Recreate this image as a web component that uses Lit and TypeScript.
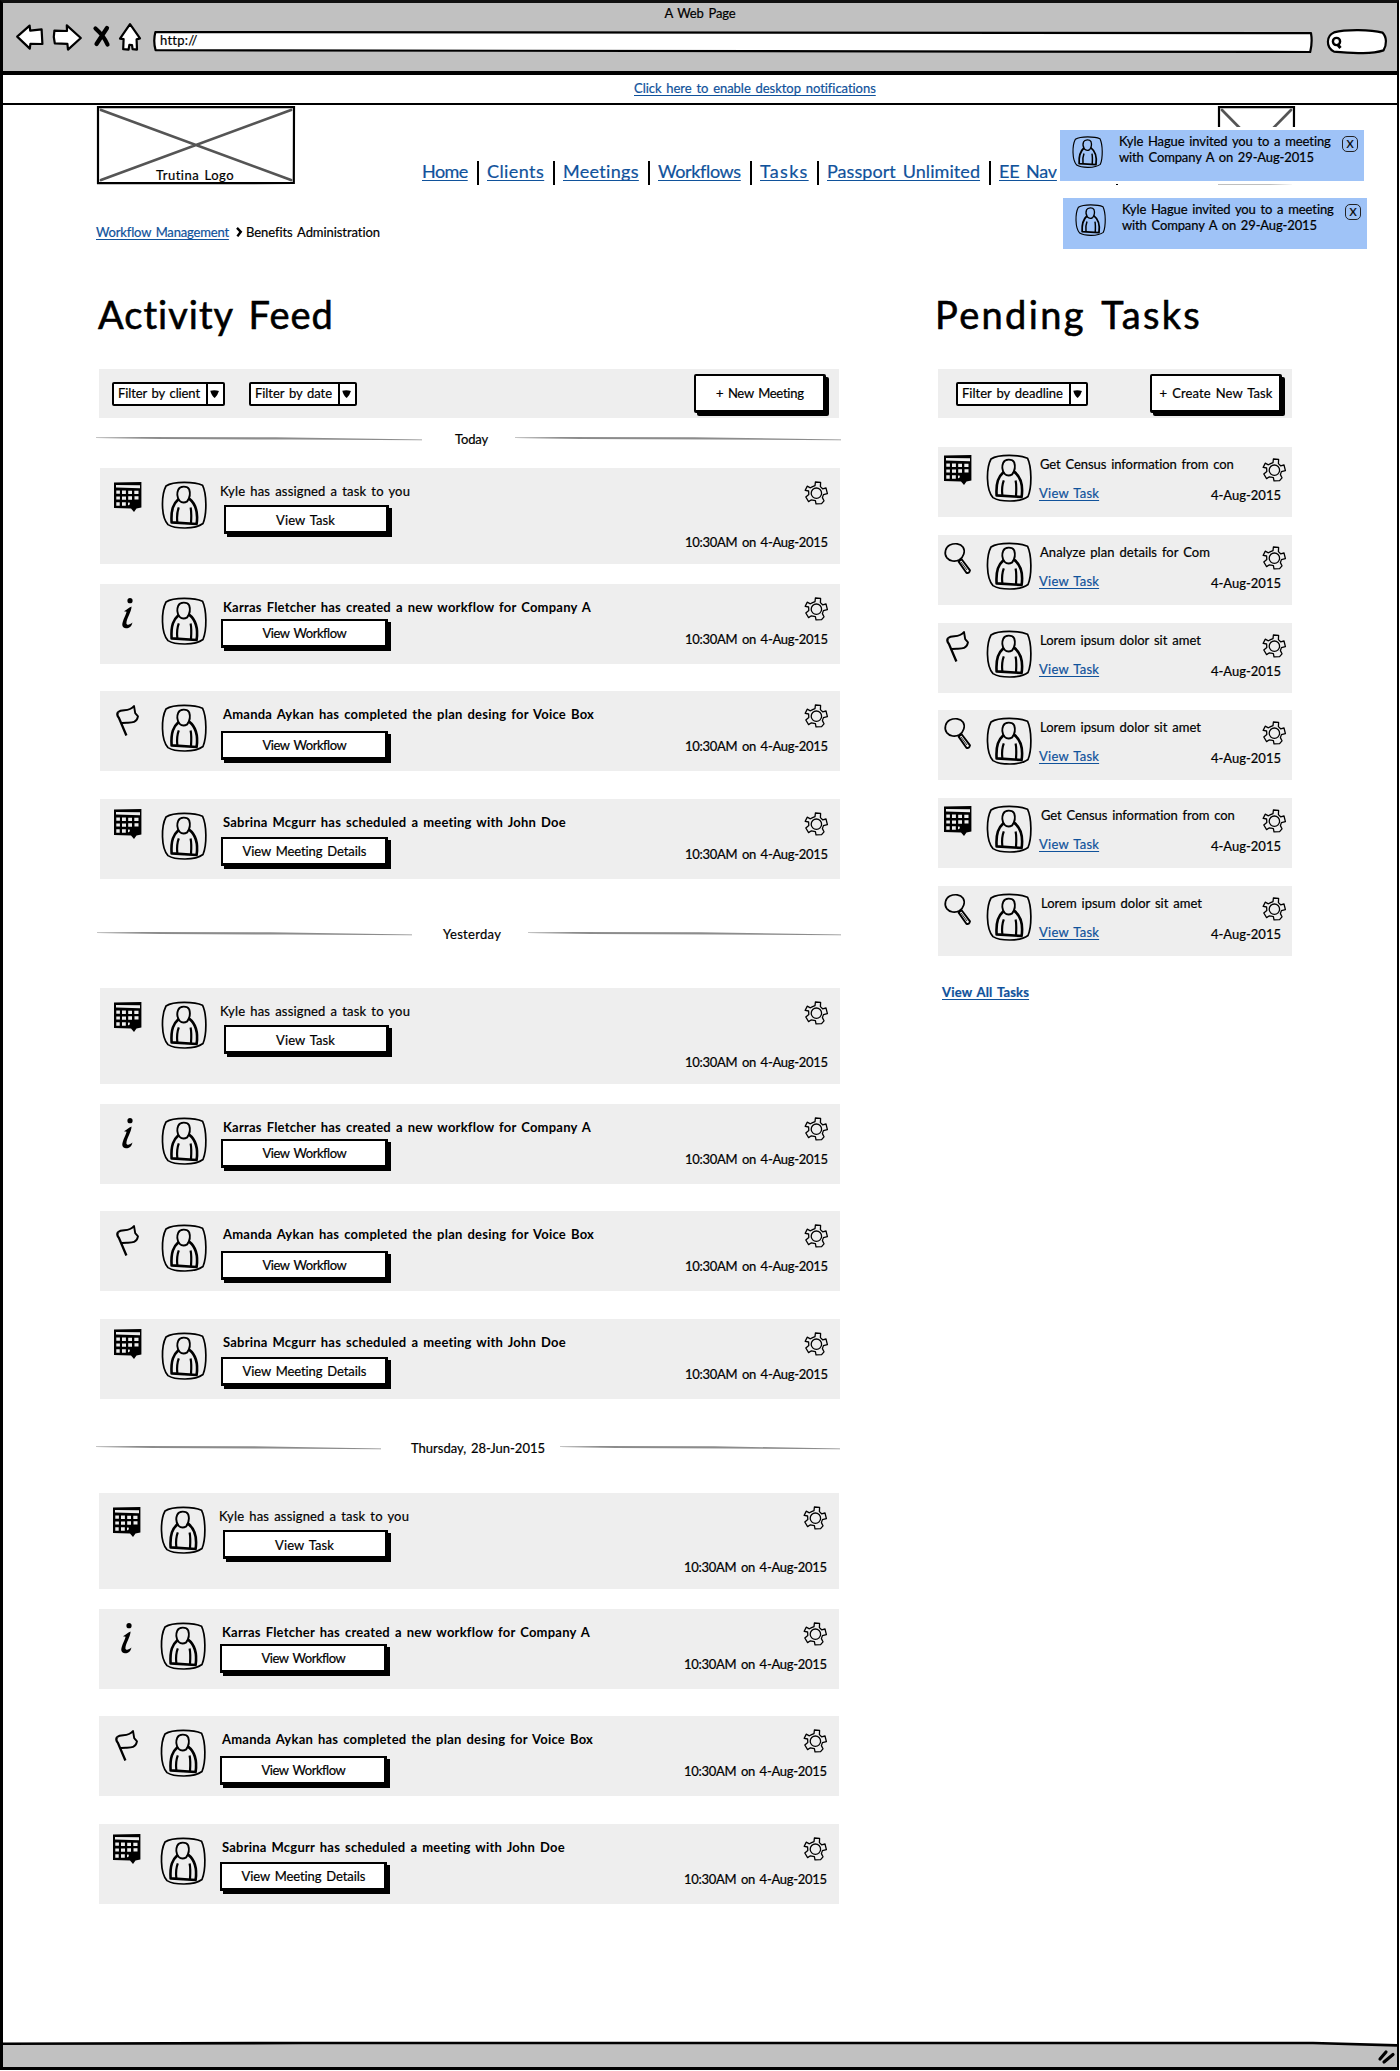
import { LitElement, html, css, svg, nothing } from "lit";
import { customElement, property } from "lit/decorators.js";
import { styleMap } from "lit/directives/style-map.js";

/** A run of text tracked out to an exact width. */
@customElement("fit-text")
class FitText extends LitElement {
  @property() text = "";
  @property({ type: Number }) w = 0;
  @property({ type: Boolean, reflect: true }) link = false;
  static styles = css`
    :host { display: inline-block; white-space: pre; flex: none; word-spacing: .12em; }
    :host([link]) span {
      color: #10529b;
      text-decoration: underline;
      text-decoration-thickness: 1px;
      text-underline-offset: 2px;
      text-decoration-skip-ink: none;
    }
  `;
  render() {
    return html`<span>${this.text}</span>`;
  }
  updated() {
    const s = this.renderRoot.querySelector("span") as HTMLElement;
    s.style.letterSpacing = "0px";
    const natural = s.getBoundingClientRect().width;
    s.style.letterSpacing = `${(this.w - natural) / (this.text.length - 0.5)}px`;
    this.style.width = `${this.w}px`;
  }
}

const t = (text: string, w: number, link = false) =>
  html`<fit-text .text=${text} .w=${w} ?link=${link}></fit-text>`;

const icons: Record<string, unknown> = {
  calendar: svg`
    <path d="M0 .6 27.4 0V25.6L22.5 26.4 20 30 17 26.4 0 26Z" fill="#000"/>
    <path d="M2 3 26 3.3V6.2L2 5.6Z" fill="#eee"/>
    <path d="M2.3 8.6h3.6v3.2H2.3zM8 8.6h3.9v3.4H8zM14.2 8.8h3.8v3.2h-3.8zM20.3 8.8h4.2v3.2h-4.2zM2.3 14.5h3.6v3.1H2.3zM8 14.4h4v3.3H8zM14.2 14.2h3.8v3.6h-3.8zM20.5 14.2h4v3.2h-4zM2.3 20.3h3.4v3.4H2.3zM8 20.3h3.8v3.4H8zM14 20.6l2 .2-.6 2.3-1.4.2z" fill="#eee"/>`,
  info: svg`
    <circle cx="16" cy="2.7" r="2.6" fill="#000"/>
    <path d="M10 13.2C13 11.7 14.5 9.7 17.6 8.6 17.2 14.5 12.7 20.5 12.4 25.2 12.5 27.3 15.5 27.2 18.4 24.6 17.6 29 14.6 30.5 12 30.3 8 30 7.8 26.8 8.8 23.8 9.8 20 12 16.8 12.6 13.8Z" fill="#000"/>`,
  flag: svg`
    <path d="M4.2 7C8.2 3.2 14.6 8 20 1L21.2 8.2 24 11.4C22.3 20.2 14.5 16.8 8 18" fill="none" stroke="#000" stroke-width="1.9" stroke-linejoin="round"/>
    <path d="M4.2 7C2.4 9.4 3.6 11.4 5 13L12.4 30.5" fill="none" stroke="#000" stroke-width="2.3"/>`,
  search: svg`
    <path d="M5.8 2.1C10.5-.1 16.5.3 19.1 4.2 21.6 8.2 19.6 14.2 15.4 16.8 11.2 19.2 5.8 18.4 2.7 14.6-.2 10.6 1.4 4.2 5.8 2.1Z" fill="none" stroke="#000" stroke-width="1.7"/>
    <path d="M14.6 18.6 17.6 16.2 26 27.4Q25.2 30.8 22.4 29.8Z" fill="#eee" stroke="#000" stroke-width="1.9" stroke-linejoin="round"/>
    <path d="M17 19 23 27" stroke="#000" stroke-width=".8"/>`,
};

const icon = (name: string) =>
  html`<svg class="kind" width="28" height="32" viewBox="0 0 28 32">${icons[name]}</svg>`;

const avatar = (w = 46, h = 48) => html`
  <svg class="avatar" width=${w} height=${h} viewBox="0 0 46 48" preserveAspectRatio="none">
    <g fill="none" stroke="#000" stroke-linejoin="round">
      <path d="M5 5C13-.2 34 .8 41.5 4.2 45.8 13 46 33 42 42.5 34 48.6 14 48 7 43.6-.2 36 .2 14 5 5Z" stroke-width="1.7"/>
      <path d="M17.2 8.8C19 4.6 26.4 4.8 28.2 8.4 29.6 12.6 28.6 17 26.2 20.4 23.8 21.8 20.6 21.8 18.4 19.6 16 16 15.8 12 17.2 8.8Z" stroke-width="1.9"/>
      <path d="M17.6 18C12.6 22.6 9.8 28 10.6 41.4L35.6 43C37.2 32 34.6 22.6 27.8 17.4" stroke-width="2.6"/>
      <path d="M17.8 26.4C16 31 15.8 36 16.3 41M29.6 26.4C30.6 31 30.4 36 30 42" stroke-width="2.2"/>
    </g>
  </svg>`;

const gear = () => html`
  <svg class="gear" width="24" height="24" viewBox="0 0 24 24" fill="none" stroke="#000" stroke-width="1.3" stroke-linejoin="round">
    <path d="M8.6 5.6 11 4.6 11.4 1 16.6 1.4 16.4 5.6 18.6 7.8 22 7 23.4 12.6 19.4 13.6 18.4 16.6 20 19.8 17.6 22.6 12 22.8 11.4 19.6 7.4 18.8 4.6 20.6 1.8 16 4.8 13.4 4.6 10 1.2 9.4 3.2 5.2 6.4 6.8Z"/>
    <circle cx="12.4" cy="12.2" r="5.2"/>
  </svg>`;

/** Hairline that swells in the middle and sinks towards its right end. */
const rule = (w: number) => html`
  <svg width=${w} height="4" viewBox="0 0 100 4" preserveAspectRatio="none">
    <path d="M0 .4 15 .1 55 .3 100 2.4V3.2L60 2.6 20 1.9 0 1Z" fill="#8c8c8c"/>
  </svg>`;

interface Item {
  kind: string;
  size: string;
  text: string;
  w: number;
  button: string;
  bw: number;
}

const items: Item[] = [
  { kind: "calendar", size: "tall", text: "Kyle has assigned a task to you", w: 190, button: "View Task", bw: 59 },
  { kind: "info", size: "second", text: "Karras Fletcher has created a new workflow for Company A", w: 368, button: "View Workflow", bw: 84 },
  { kind: "flag", size: "third", text: "Amanda Aykan has completed the plan desing for Voice Box", w: 371, button: "View Workflow", bw: 84 },
  { kind: "calendar", size: "fourth", text: "Sabrina Mcgurr has scheduled a meeting with John Doe", w: 343, button: "View Meeting Details", bw: 124 },
];

const groups = [
  { cls: "g1", label: "Today", w: 33, left: 326, gapL: 33, right: 326 },
  { cls: "g2", label: "Yesterday", w: 58, left: 315, gapL: 31, right: 313 },
  { cls: "g3", label: "Thursday, 28-Jun-2015", w: 134, left: 285, gapL: 30, right: 280 },
];

const tasks = [
  { kind: "calendar", text: "Get Census information from con", w: 194, dx: 1, gap: 18 },
  { kind: "search", text: "Analyze plan details for Com", w: 170, dx: 1, gap: 18 },
  { kind: "flag", text: "Lorem ipsum dolor sit amet", w: 161, dx: 1, gap: 17 },
  { kind: "search", text: "Lorem ipsum dolor sit amet", w: 161, dx: 1, gap: 18 },
  { kind: "calendar", text: "Get Census information from con", w: 194, dx: 2, gap: 18 },
  { kind: "search", text: "Lorem ipsum dolor sit amet", w: 161, dx: 2, gap: 0 },
];

const nav: [string, number, number][] = [
  ["Home", 46, 46],
  ["Clients", 57, 57],
  ["Meetings", 76, 76],
  ["Workflows", 83, 83],
  ["Tasks", 48, 48],
  ["Passport Unlimited", 153, 153],
  ["EE Nav", 58, 108],
];

@customElement("app-root")
class AppRoot extends LitElement {
  static styles = css`
    :host {
      display: block;
      position: relative;
      box-sizing: border-box;
      width: 1400px;
      height: 2071px;
      overflow: hidden;
      background: #fff;
      color: #000;
      font: 13px/16px Lato, "Open Sans", sans-serif;
      -webkit-text-stroke: .2px;
    }
    * { box-sizing: border-box; }
    svg { display: block; flex: none; overflow: visible; }
    .window {
      display: flex;
      flex-direction: column;
      width: 1399px;
      height: 2070px;
      border: 3px solid #000;
      border-right-width: 2px;
      border-top-color: #111;
    }
    .chrome { height: 72px; background: #c1c1c1; border-bottom: 4px solid #000; display: flex; flex-direction: column; align-items: center; flex: none; }
    .title { margin-top: 2px; height: 16px; }
    .tools { display: flex; align-items: flex-start; align-self: stretch; padding: 2px 0 0 13px; }
    .notice { height: 30px; border-bottom: 2px solid #000; display: flex; justify-content: center; padding: 5px 0 0 110px; flex: none; }
    .header { display: flex; padding: 1px 0 0 94px; height: 79px; flex: none; }
    .image { position: relative; width: 198px; height: 78px; display: flex; align-items: flex-end; justify-content: center; }
    .image.small { width: 77px; margin-left: 92px; }
    .image svg { position: absolute; inset: 0; }
    .image fit-text { position: relative; bottom: 1px; left: -1px; }
    .nav { display: flex; margin-left: 127px; padding-top: 54px; font-size: 18px; line-height: 22px; }
    .nav .cell { display: flex; }
    .sep { width: 2px; height: 24px; background: #000; margin: 1px 8px 0 9px; }
    .crumbs { display: flex; align-items: center; padding: 40px 0 0 93px; height: 56px; flex: none; }
    .crumbs svg { margin: 0 3px 0 7px; }
    .columns { display: flex; align-items: flex-start; padding: 52px 0 0 93px; flex: 1; }
    .feed { width: 745px; }
    .tasks { width: 354px; margin-left: 97px; }
    h1 { margin: 0 0 33px 2px; font-weight: 400; font-size: 38px; line-height: 44px; height: 44px; -webkit-text-stroke: .6px #000; }
    .tasks h1 { margin-left: -3px; }
    .bar { height: 49px; background: #eee; display: flex; align-items: flex-start; }
    .feed .bar { width: 740px; margin-left: 3px; padding: 0 10px 0 13px; }
    .tasks .bar { padding: 0 7px 0 18px; margin-bottom: 29px; }
    .select { height: 24px; margin: 13px 24px 0 0; border: 2px solid #000; border-radius: 2px; background: #fff; display: flex; }
    .select fit-text { margin: 1px 6px 0 4px; }
    .select svg { width: 17px; height: 20px; border-left: 2px solid #000; }
    .button { background: #fff; border: 2px solid #000; box-shadow: 3px 3px 0 #000, inset -1px -1px 0 #000; display: flex; align-items: center; justify-content: center; padding-bottom: 1px; }
    .bar .button { width: 132px; height: 39px; margin: 5px 3px 0 auto; border-radius: 2px; }
    .rule { display: flex; align-items: center; height: 16px; }
    .rule svg:last-child { margin-left: auto; }
    .g1 .rule { margin: 13px 0 21px; }
    .g2 .rule { margin: 47px 0 46px 1px; width: 744px; }
    .g3 .rule { margin: 41px 0 37px; width: 744px; }
    .card { height: 80px; width: 740px; margin-left: 4px; background: #eee; display: flex; align-items: flex-start; }
    .g3 .card { margin-left: 3px; }
    .card .kind { margin: 14px 19px 0 14px; }
    .card .avatar { margin-top: 13px; }
    .body { display: flex; flex-direction: column; align-items: flex-start; margin-left: 14px; padding-top: 15px; font-weight: 700; }
    .body > fit-text { margin-left: 2px; -webkit-text-stroke: 0; }
    .body .button { width: 167px; height: 29px; font-weight: 400; margin-top: 4px; }
    .side { display: flex; flex-direction: column; align-items: flex-end; justify-content: space-between; margin-left: auto; padding: 13px 12px 17px 0; height: 80px; }
    .tall { height: 96px; margin-bottom: 20px; }
    .tall .side { height: 96px; padding-bottom: 14px; }
    .tall .body { margin-left: 13px; font-weight: 400; }
    .tall .body > fit-text { margin-left: 0; -webkit-text-stroke: .2px; }
    .tall .body .button { width: 165px; margin: 6px 0 0 4px; padding-bottom: 0; }
    .tall .body .button fit-text { margin: 0 2px 0 0; }
    .second { margin-bottom: 27px; }
    .third { margin-bottom: 28px; }
    .third .button { margin-top: 9px; }
    .fourth .button { margin-top: 7px; }
    .fourth .kind { margin-top: 10px; }
    .task { height: 70px; background: #eee; display: flex; align-items: flex-start; }
    .task .kind { margin: 8px 14px 0 6px; }
    .task .avatar { margin-top: 7px; }
    .task .detail { display: flex; flex-direction: column; align-items: flex-start; gap: 13px; padding: 9px 0 0 7px; width: 170px; }
    .task .side { height: 70px; padding: 11px 6px 14px 0; }
    .task .side fit-text { margin-right: 5px; }
    .all { margin: 28px 0 0 4px; font-weight: 700; }
    .toast { position: absolute; display: flex; align-items: flex-start; width: 304px; height: 51px; background: #9fc3f7; box-shadow: 0 0 0 3px #fff; }
    .toast.a { left: 1060px; top: 130px; }
    .toast.b { left: 1063px; top: 198px; }
    .toast .avatar { margin: 6px 16px 0 12px; }
    .toast .lines { display: flex; flex-direction: column; padding-top: 3px; }
    .close { width: 16px; height: 16px; border: 1px solid #222; border-radius: 5px; margin: 6px 6px 0 auto; display: flex; align-items: center; justify-content: center; font-size: 11px; line-height: 12px; }
    .footer { height: 28px; flex: none; }
  `;

  private select(label: string, w: number) {
    return html`<div class="select">${t(label, w)}
      <svg viewBox="0 0 17 20"><path d="M2.6 6.2Q8 5 12.4 6.6 10.8 12 7.6 14.4 4 12 2.6 6.2Z"/></svg>
    </div>`;
  }

  private image(w: number, label = "") {
    return html`<div class="image ${label ? "" : "small"}">
      <svg width=${w} height="78" viewBox="0 0 ${w} 78" fill="none">
        <path d="M4 4 ${w - 4} 74M${w - 4} 4 4 74" stroke="#555" stroke-width="2.7" stroke-linecap="round"/>
        <path d="M1 1.2 ${w - 1} 1 ${w - 1.2} 77 1 77.2Z" stroke="#000" stroke-width="2.2"/>
      </svg>${label ? t(label, 78) : nothing}</div>`;
  }

  private toast(cls: string) {
    return html`<div class="toast ${cls}">${avatar(31, 32)}
      <div class="lines">${t("Kyle Hague invited you to a meeting", 212)}${t("with Company A on 29-Aug-2015", 195)}</div>
      <div class="close">X</div>
    </div>`;
  }

  render() {
    return html`
      <div class="window">
        <div class="chrome">
          <div class="title">${t("A Web Page", 71)}</div>
          <div class="tools">
            <svg width="1370" height="32" viewBox="0 0 1370 32" fill="#fff" stroke="#000" stroke-width="2.2" stroke-linejoin="round">
              <path d="M1.2 13.6 13.6 2.6 14.2 7.6 25.6 6.4 26.4 21 14.4 20.8 13.8 25.6Z"/>
              <path d="M38.4 7.6 51 8 50.8 2.4 64.8 15 52 26.6 51.4 20.8 38.8 20.4 37.8 14Z"/>
              <path d="M114 1.2 124 15.4 120.6 16.4 121 26.6 116.6 26.2 116 22 113.4 21.8 112.6 26.6 107.2 26.2 107.6 16.2 104 15.6Z"/>
              <path d="M79.5 5.5Q88 13 91.5 21.5M91 5 80.5 21" stroke-width="4.2" stroke-linecap="round"/>
              <path d="M139.4 9 1295 10.2Q1296.6 19 1294.2 29L139.6 27.2Q137 18 139.4 9Z"/>
              <path d="M1318 9.4C1330 6.2 1355 6.6 1366.5 9.6 1371 14 1370.8 22 1367.5 27.4 1354 31.8 1334 29.6 1318 28.6 1309.4 24 1310.4 12.6 1318 9.4Z"/>
              <circle cx="1320.5" cy="18.5" r="3.6" stroke-width="2.4"/>
              <path d="M1322 22 1324.5 25" stroke-width="3"/>
              <foreignObject x="144" y="8.5" width="60" height="18"><div>${t("http://", 37)}</div></foreignObject>
            </svg>
          </div>
        </div>
        <div class="notice">${t("Click here to enable desktop notifications", 242, true)}</div>
        <div class="header">
          ${this.image(198, "Trutina Logo")}
          <div class="nav">
            ${nav.map(([label, w, cell]) => html`
              <div class="cell" style=${styleMap({ width: `${cell}px` })}>${t(label, w, true)}</div>
              <i class="sep"></i>`)}
          </div>
          ${this.image(77)}
        </div>
        <div class="crumbs">
          ${t("Workflow Management", 133, true)}
          <svg width="7" height="10" viewBox="0 0 7 10"><path d="M1 .8 4.8 4.8 1.4 9.4" fill="none" stroke="#000" stroke-width="2.4"/></svg>
          ${t("Benefits Administration", 134)}
        </div>
        <div class="columns">
          <section class="feed">
            <h1>${t("Activity Feed", 236)}</h1>
            <div class="bar">
              ${this.select("Filter by client", 82)}${this.select("Filter by date", 77)}
              <div class="button">${t("+ New Meeting", 88)}</div>
            </div>
            ${groups.map((g) => html`
              <div class=${g.cls}>
                <div class="rule">
                  ${rule(g.left)}<fit-text style=${styleMap({ "margin-left": `${g.gapL}px` })} .text=${g.label} .w=${g.w}></fit-text>${rule(g.right)}
                </div>
                ${items.map((i) => html`
                  <div class="card ${i.size}">
                    ${icon(i.kind)}${avatar()}
                    <div class="body">${t(i.text, i.w)}<div class="button">${t(i.button, i.bw)}</div></div>
                    <div class="side">${gear()}${t("10:30AM on 4-Aug-2015", 143)}</div>
                  </div>`)}
              </div>`)}
          </section>
          <section class="tasks">
            <h1>${t("Pending Tasks", 266)}</h1>
            <div class="bar">
              ${this.select("Filter by deadline", 101)}
              <div class="button">${t("+ Create New Task", 113)}</div>
            </div>
            ${tasks.map((k) => html`
              <div class="task" style=${styleMap({ "margin-bottom": `${k.gap}px` })}>
                ${icon(k.kind)}${avatar()}
                <div class="detail">
                  <fit-text style=${styleMap({ "margin-left": `${k.dx}px` })} .text=${k.text} .w=${k.w}></fit-text>
                  ${t("View Task", 60, true)}
                </div>
                <div class="side">${gear()}${t("4-Aug-2015", 70)}</div>
              </div>`)}
            <div class="all">${t("View All Tasks", 87, true)}</div>
          </section>
        </div>
        <svg class="footer" width="1394" height="28" viewBox="0 0 1394 28">
          <path d="M0 4.8 300 4 1310 4 1394 6.4V28H0Z" fill="#c1c1c1"/>
          <path d="M0 4.8 300 4 1310 4 1394 6.4" fill="none" stroke="#000" stroke-width="2.6"/>
          <path d="M1377 20 1383 13M1381 23 1390 15.5" stroke="#000" stroke-width="3.2" stroke-linecap="round"/>
        </svg>
      </div>
      ${this.toast("a")}${this.toast("b")}
    `;
  }
}
